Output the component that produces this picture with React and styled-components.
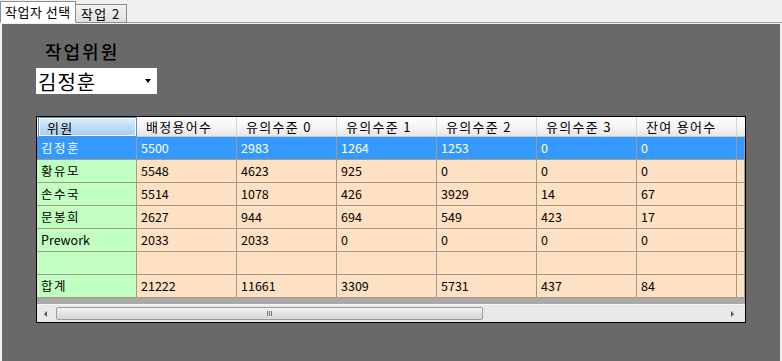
import React from 'react';
import styled, { createGlobalStyle } from 'styled-components';

const Global = createGlobalStyle`
  body {
    margin: 0;
    background: #f0f0f0;
    font-family: "Noto Sans CJK KR", "DejaVu Sans", sans-serif;
  }
`;

const Window = styled.div`
  width: 782px;
  height: 361px;
  display: flex;
  flex-direction: column;
  overflow: hidden;
`;

const TabStrip = styled.div`
  height: 22px;
  display: flex;
  align-items: flex-end;
  border-bottom: 1px solid #a0a0a0;
`;

const Tab = styled.div`
  height: ${p => (p.$active ? '22px' : '19px')};
  padding: 0 ${p => (p.$active ? '4px' : '5px')};
  margin-bottom: -1px;
  box-sizing: border-box;
  border: 1px solid #898c95;
  border-bottom: ${p => (p.$active ? '1px solid #fff' : '1px solid #898c95')};
  border-left: ${p => (p.$active ? '1px solid #898c95' : 'none')};
  background: ${p => (p.$active ? '#fff' : 'linear-gradient(#f2f2f2, #e0e0e0)')};
  font-size: 13px;
  letter-spacing: ${p => (p.$active ? '0.5px' : '1.5px')};
  line-height: ${p => (p.$active ? '19px' : '17px')};
  color: #000;
  white-space: nowrap;
`;

const Panel = styled.div`
  flex: 1;
  margin: 1px 2px 0 2px;
  background: #696969;
  padding: 16px 0 0 34px;
  display: flex;
  flex-direction: column;
  align-items: flex-start;
`;

const Label = styled.div`
  margin-left: 9px;
  font-size: 18px;
  letter-spacing: 2px;
  font-weight: 500;
  line-height: 22px;
  color: #000;
`;

const Combo = styled.div`
  margin-top: 6px;
  width: 121px;
  height: 26px;
  box-sizing: border-box;
  background: #fff;
  display: flex;
  align-items: center;
  justify-content: space-between;
  padding: 0 6px 0 2px;
  font-size: 20px;
  letter-spacing: 1px;
  color: #000;
`;

const Arrow = styled.span`
  width: 0;
  height: 0;
  border-left: 3px solid transparent;
  border-right: 3px solid transparent;
  border-top: 4px solid #000;
`;

const Grid = styled.div`
  margin-top: 22px;
  width: 710px;
  height: 207px;
  box-sizing: border-box;
  border: 1px solid #000;
  background: #ababab;
  display: flex;
  flex-direction: column;
  overflow: hidden;
`;

const Rows = styled.div`
  flex: 1;
  overflow: hidden;
`;

const Row = styled.div`
  display: grid;
  grid-template-columns: repeat(7, 100px) 8px;
  height: 23px;
`;

const HeadRow = styled(Row)`
  height: 20px;
  background: linear-gradient(#ffffff, #f2f2f2 60%, #e4e4e4);
`;

const HeadCell = styled.div`
  box-sizing: border-box;
  border-right: 1px solid #d5d5d5;
  border-bottom: 1px solid #c8c8c8;
  padding-left: 9px;
  font-size: 13px;
  letter-spacing: 1.3px;
  line-height: 19px;
  color: #000;
  white-space: nowrap;
  overflow: hidden;
  ${p => p.$focus && `
    background: linear-gradient(#dcedfb, #bcdcf6 50%, #a6d0f3);
    border: 1px solid #5b8fc6;
    box-shadow: inset 0 0 0 1px #fff;
    padding-left: 8px;
    margin: 0 0 0 1px;
  `}
`;

const Cell = styled.div`
  box-sizing: border-box;
  border-right: 1px solid #a49a8c;
  border-bottom: 1px solid #a49a8c;
  padding-left: 4px;
  font-size: 12.5px;
  letter-spacing: ${p => (p.$name ? '1.5px' : '0')};
  line-height: 22px;
  white-space: nowrap;
  overflow: hidden;
  background: ${p => (p.$selected ? '#3399ff' : p.$name ? '#c0ffc0' : '#fee0c3')};
  color: ${p => (p.$selected ? '#fff' : '#000')};
`;

const NameCell = styled(Cell)`
  background: ${p => (p.$selected ? '#3399ff' : '#c0ffc0')};
`;

const HScroll = styled.div`
  height: 17px;
  margin-top: 4px;
  background: #e8e8e8;
  border-top: 1px solid #f7f7f7;
  display: flex;
  align-items: center;
  padding: 0 11px 0 2px;
  gap: 3px;
`;

const ScrollArrow = styled.span`
  width: 0;
  height: 0;
  border-top: 3px solid transparent;
  border-bottom: 3px solid transparent;
  ${p => (p.$dir === 'left' ? 'border-right: 3px solid #555; margin: 0 6px 0 5px;' : 'border-left: 3px solid #555; margin-left: auto;')}
`;

const Thumb = styled.div`
  width: 427px;
  height: 13px;
  box-sizing: border-box;
  border: 1px solid #9b9b9b;
  border-radius: 2px;
  background: linear-gradient(#f3f3f3, #e3e3e3 50%, #d6d6d6);
  display: flex;
  align-items: center;
  justify-content: center;
  gap: 1px;
`;

const Grip = styled.span`
  width: 1px;
  height: 5px;
  background: #777;
`;

const headers = ['위원', '배정용어수', '유의수준 0', '유의수준 1', '유의수준 2', '유의수준 3', '잔여 용어수'];

const rows = [
  ['김정훈', '5500', '2983', '1264', '1253', '0', '0'],
  ['황유모', '5548', '4623', '925', '0', '0', '0'],
  ['손수국', '5514', '1078', '426', '3929', '14', '67'],
  ['문봉희', '2627', '944', '694', '549', '423', '17'],
  ['Prework', '2033', '2033', '0', '0', '0', '0'],
  ['', '', '', '', '', '', ''],
  ['합계', '21222', '11661', '3309', '5731', '437', '84'],
];

export default function App() {
  return (
    <Window>
      <Global />
      <TabStrip>
        <Tab $active>작업자 선택</Tab>
        <Tab>작업 2</Tab>
      </TabStrip>
      <Panel>
        <Label>작업위원</Label>
        <Combo>
          김정훈
          <Arrow />
        </Combo>
        <Grid>
          <Rows>
            <HeadRow>
              {headers.map((h, i) => (
                <HeadCell key={h} $focus={i === 0}>{h}</HeadCell>
              ))}
              <HeadCell />
            </HeadRow>
            {rows.map((r, ri) => (
              <Row key={ri}>
                {r.map((v, ci) =>
                  ci === 0 ? (
                    <NameCell key={ci} $name={v !== 'Prework'} $selected={ri === 0}>{v}</NameCell>
                  ) : (
                    <Cell key={ci} $selected={ri === 0}>{v}</Cell>
                  )
                )}
                <Cell $selected={ri === 0} />
              </Row>
            ))}
          </Rows>
          <HScroll>
            <ScrollArrow $dir="left" />
            <Thumb>
              <Grip /><Grip /><Grip />
            </Thumb>
            <ScrollArrow $dir="right" />
          </HScroll>
        </Grid>
      </Panel>
    </Window>
  );
}
